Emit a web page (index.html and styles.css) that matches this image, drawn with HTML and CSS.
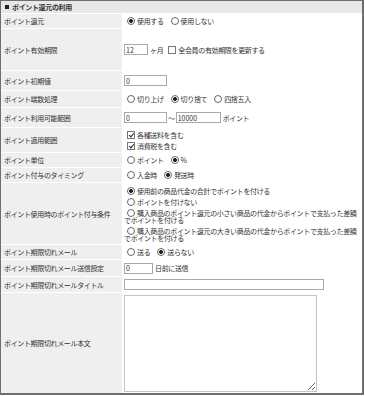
FILE: index.html
```html
<!DOCTYPE html>
<html lang="ja">
  <head>
    <meta charset="UTF-8" />
    <title>ポイント還元の利用</title>
    <link rel="stylesheet" href="styles.css">
  </head>
  <body>
    <section class="panel">
      <h2 class="panelTitle"><span class="mark"></span>ポイント還元の利用</h2>
      <form class="formGrid" action="/#" method="POST" autocomplete="off">
        <div class="label">ポイント還元</div>
        <div class="value">
          <label class="opt"><input type="radio" name="use" checked />使用する</label>
          <label class="opt"><input type="radio" name="use" />使用しない</label>
        </div>

        <div class="label">ポイント有効期限</div>
        <div class="value">
          <input class="num w24" type="text" value="12" /><span class="unit">ヶ月</span>
          <label class="opt"><input type="checkbox" />全会員の有効期限を更新する</label>
        </div>

        <div class="label">ポイント初期値</div>
        <div class="value"><input class="num w43" type="text" value="0" /></div>

        <div class="label">ポイント端数処理</div>
        <div class="value">
          <label class="opt"><input type="radio" name="round" />切り上げ</label>
          <label class="opt"><input type="radio" name="round" checked />切り捨て</label>
          <label class="opt"><input type="radio" name="round" />四捨五入</label>
        </div>

        <div class="label">ポイント利用可能範囲</div>
        <div class="value">
          <input class="num w43" type="text" value="0" /><span class="tilde">～</span><input class="num w45" type="text" value="10000" /><span class="unit">ポイント</span>
        </div>

        <div class="label">ポイント適用範囲</div>
        <div class="value stack">
          <label class="opt"><input type="checkbox" checked />各種送料を含む</label>
          <label class="opt"><input type="checkbox" checked />消費税を含む</label>
        </div>

        <div class="label">ポイント単位</div>
        <div class="value">
          <label class="opt"><input type="radio" name="unit" />ポイント</label>
          <label class="opt"><input type="radio" name="unit" checked />%</label>
        </div>

        <div class="label">ポイント付与のタイミング</div>
        <div class="value">
          <label class="opt"><input type="radio" name="timing" />入金時</label>
          <label class="opt"><input type="radio" name="timing" checked />発送時</label>
        </div>

        <div class="label">ポイント使用時のポイント付与条件</div>
        <div class="value stack cond">
          <label class="opt"><input type="radio" name="cond" checked />使用前の商品代金の合計でポイントを付ける</label>
          <label class="opt"><input type="radio" name="cond" />ポイントを付けない</label>
          <label class="opt"><input type="radio" name="cond" />購入商品のポイント還元の小さい商品の代金からポイントで支払った差額でポイントを付ける</label>
          <label class="opt"><input type="radio" name="cond" />購入商品のポイント還元の大きい商品の代金からポイントで支払った差額でポイントを付ける</label>
        </div>

        <div class="label">ポイント期限切れメール</div>
        <div class="value">
          <label class="opt"><input type="radio" name="mail" />送る</label>
          <label class="opt"><input type="radio" name="mail" checked />送らない</label>
        </div>

        <div class="label">ポイント期限切れメール送信設定</div>
        <div class="value">
          <input class="num w30" type="text" value="0" /><span class="unit">日前に送信</span>
        </div>

        <div class="label">ポイント期限切れメールタイトル</div>
        <div class="value"><input class="num w200" type="text" /></div>

        <div class="label">ポイント期限切れメール本文</div>
        <div class="value"><textarea class="body"></textarea></div>
      </form>
    </section>
  </body>
</html>
```

FILE: styles.css
```css
html,
body {
  margin: 0;
  padding: 0;
  background: #fff;
}
body {
  font-family: 'Noto Sans CJK JP', 'Noto Sans', sans-serif;
  font-size: 7px;
  line-height: 8px;
  letter-spacing: -0.35px;
  color: #333;
}
.panel {
  width: 361px;
  border: 1px solid #6f6f6f;
  border-right-width: 2px;
  border-bottom-width: 2px;
}
.panelTitle {
  display: flex;
  align-items: center;
  margin: 0;
  height: 12px;
  padding-left: 4px;
  font-size: 7px;
  line-height: 12px;
  font-weight: bold;
  background: #e8e8e8;
  border-bottom: 1px solid #fff;
}
.mark {
  width: 4px;
  height: 4px;
  margin-right: 3px;
  background: #222;
}
.formGrid {
  display: grid;
  grid-template-columns: 121px 1fr;
  grid-template-rows: 14px 41px 19px 16px 19px 24px 14px 14px 61px 14px 16px 15px 100px;
  row-gap: 1px;
  margin: 0;
}
.label {
  display: flex;
  align-items: center;
  padding-left: 3px;
  background: #efefef;
}
.value {
  display: flex;
  align-items: center;
  padding: 0 3px 0 2px;
}
.value.stack {
  flex-direction: column;
  align-items: flex-start;
  justify-content: center;
}
.opt {
  display: inline-flex;
  align-items: center;
  margin-right: 4px;
}
.opt input {
  -webkit-appearance: none;
  appearance: none;
  position: relative;
  flex: none;
  width: 8px;
  height: 8px;
  box-sizing: border-box;
  margin: 0 2px 0 3px;
  border: 1px solid #666;
  background: #fff;
}
.opt input[type='radio'] {
  border-radius: 50%;
}
.opt input[type='radio']:checked {
  background: radial-gradient(circle, #222 0, #222 1.6px, #fff 2.2px);
}
.opt input[type='checkbox'] {
  border-color: #777;
}
.opt input[type='checkbox']:checked::after {
  content: '';
  position: absolute;
  left: 1.5px;
  top: 0;
  width: 2px;
  height: 4px;
  border: solid #222;
  border-width: 0 1.2px 1.2px 0;
  transform: rotate(40deg);
}
.stack .opt {
  height: 11px;
}
.cond .opt {
  display: block;
  height: auto;
  line-height: 7px;
  padding: 2px 0 1px;
  margin-right: 0;
}
.cond .opt input {
  display: inline-block;
  vertical-align: -1px;
}
.num {
  height: 11px;
  box-sizing: border-box;
  padding: 0 1px;
  border: 1px solid #a9a9a9;
  font: inherit;
  letter-spacing: 0;
  color: #333;
}
.w24 { width: 24px; }
.w30 { width: 29px; }
.w43 { width: 43px; }
.w45 { width: 45px; }
.w200 { width: 200px; }
.unit {
  margin: 0 2px;
}
.tilde {
  margin: 0 1px;
}
.body {
  width: 193px;
  height: 97px;
  box-sizing: border-box;
  border: 1px solid #c4c4c4;
  margin: 0;
}
```
